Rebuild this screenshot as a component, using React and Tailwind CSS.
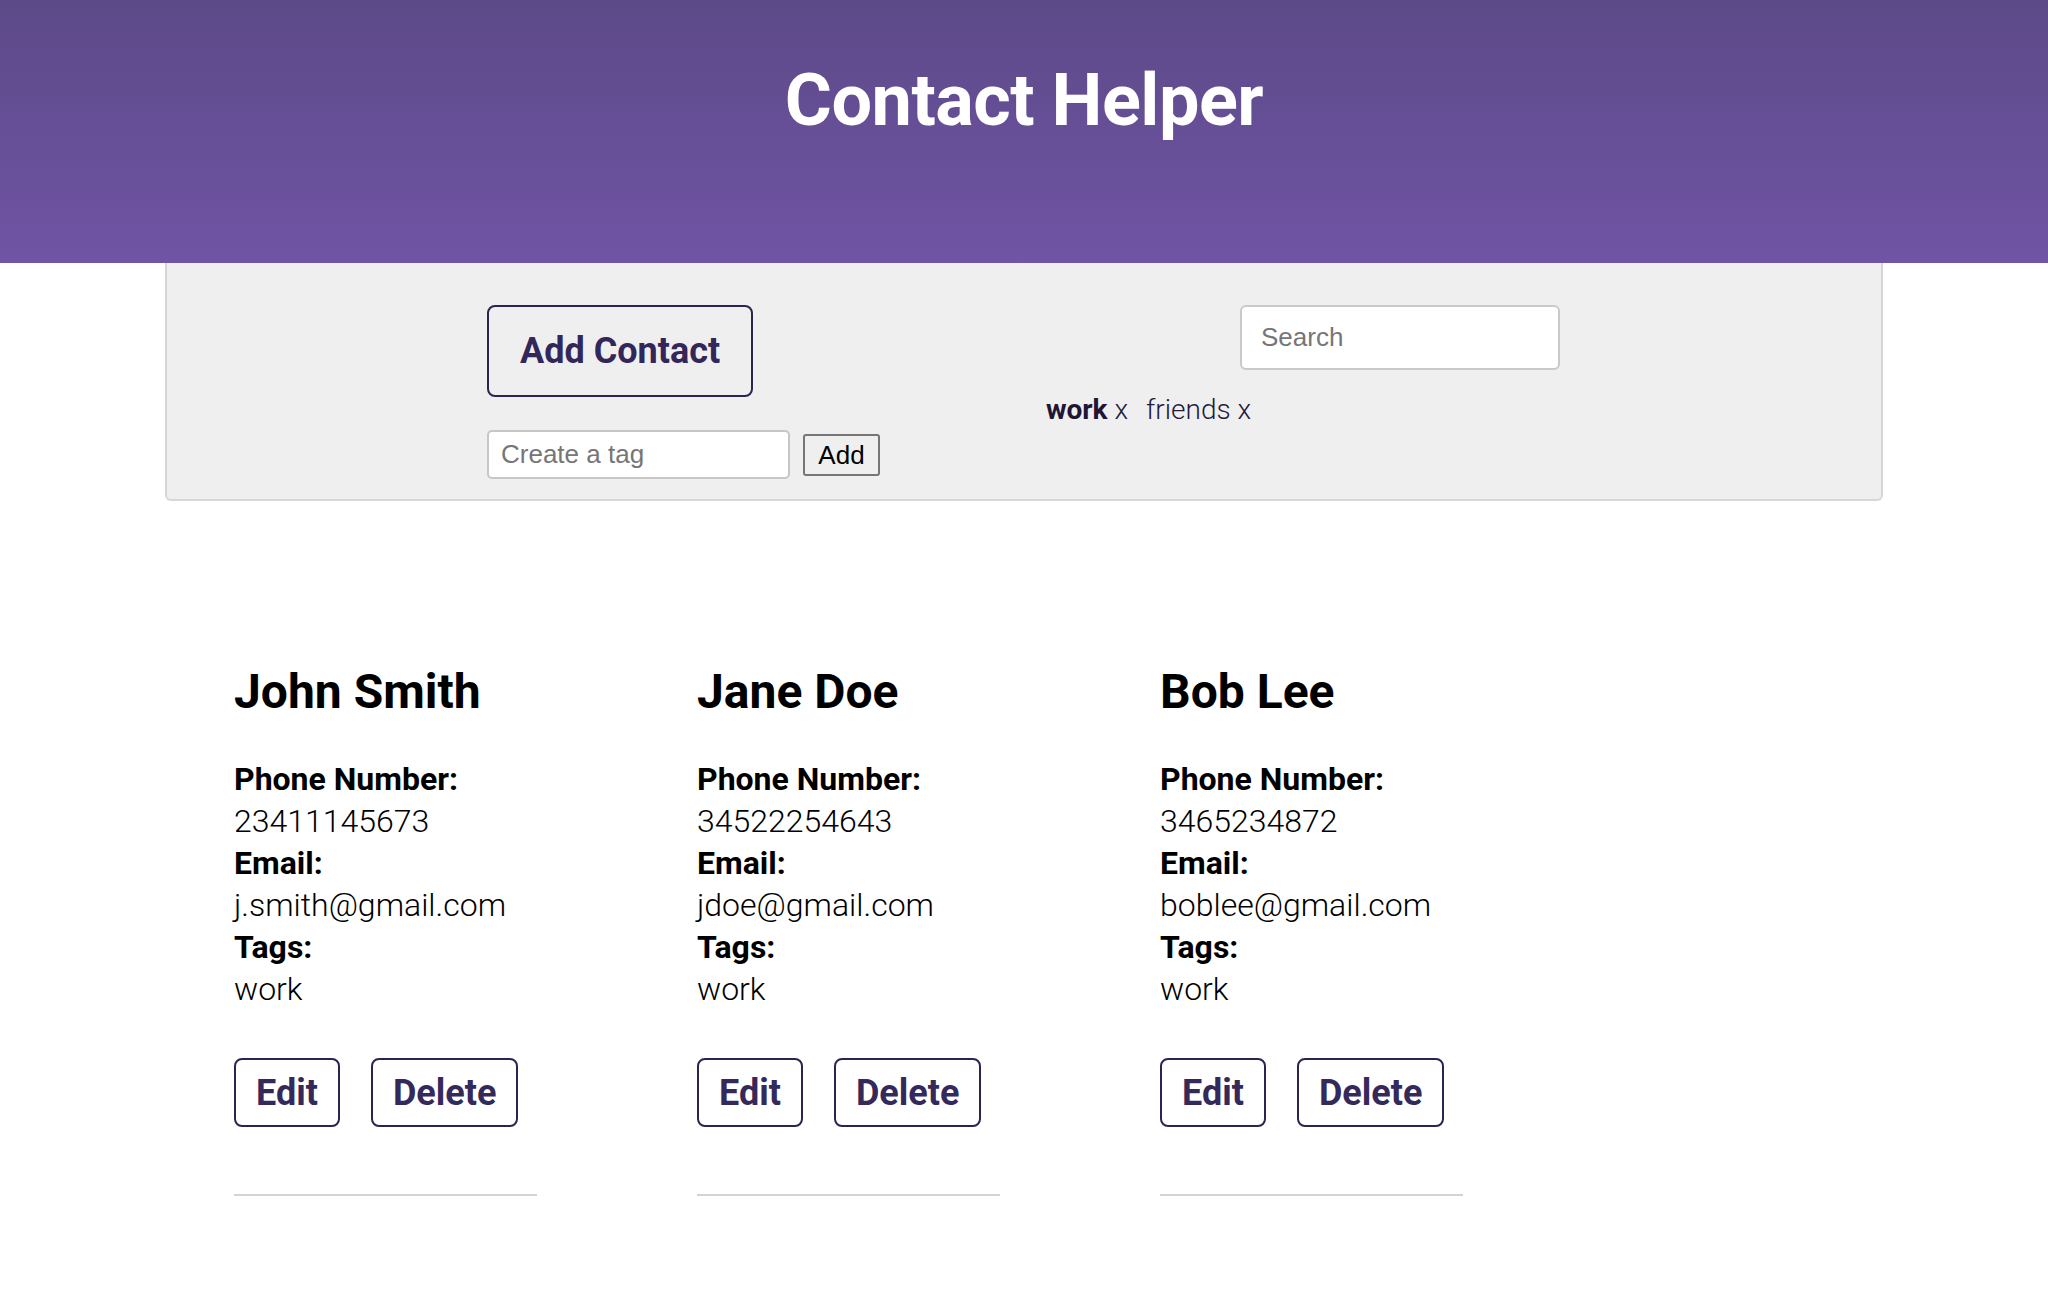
import { useState } from "react";

const contacts = [
    { id: 1, name: "John Smith", phone: "23411145673", email: "j.smith@gmail.com", tags: ["work"] },
    { id: 2, name: "Jane Doe", phone: "34522254643", email: "jdoe@gmail.com", tags: ["work"] },
    { id: 3, name: "Bob Lee", phone: "3465234872", email: "boblee@gmail.com", tags: ["work"] },
];

export default function App() {
    const [tagInput, setTagInput] = useState("");
    const [search, setSearch] = useState("");
    const tags = [
        { name: "work", active: true },
        { name: "friends", active: false },
    ];

    return (
        <div className="min-h-screen bg-white font-['Roboto',sans-serif]">
            {/* Header */}
            <header className="h-[263px] bg-gradient-to-b from-[#5c4a88] to-[#7054a5] pt-[65px]">
                <h1 className="text-center text-[72px] leading-none font-bold text-white tracking-[-0.5px]">Contact Helper</h1>
            </header>

            {/* Controls panel */}
            <div className="mx-[165px] h-[238px] border-2 border-t-0 border-[#d6d6d6] rounded-b-md bg-[#efefef] pt-[42px] flex">
                <div className="ml-[320px] flex flex-col items-start">
                    <button className="h-[92px] px-[31px] border-2 border-[#2e2350] rounded-lg text-[36px] font-bold text-[#32265a]">
                        Add Contact
                    </button>
                    <div className="mt-[33px] flex items-center gap-[13px]">
                        <input
                            value={tagInput}
                            onChange={(e) => setTagInput(e.target.value)}
                            placeholder="Create a tag"
                            className="w-[303px] h-[49px] px-[12px] bg-white border-2 border-[#c6c6c6] rounded-[5px] text-[26px] font-['Liberation_Sans',sans-serif] placeholder:text-[#767676] outline-none"
                        />
                        <button className="w-[77px] h-[42px] border-2 border-[#767676] rounded-[3px] bg-[#efefef] text-[26px] text-black font-['Liberation_Sans',sans-serif]">
                            Add
                        </button>
                    </div>
                </div>

                <div className="ml-[166px] w-[514px] flex flex-col items-start">
                    <input
                        value={search}
                        onChange={(e) => setSearch(e.target.value)}
                        placeholder="Search"
                        className="ml-[194px] w-[320px] h-[65px] px-[19px] bg-white border-2 border-[#c9c9c9] rounded-md text-[26px] font-['Liberation_Sans',sans-serif] placeholder:text-[#767676] outline-none"
                    />
                    <div className="mt-[22px] text-[28px] leading-[36px] text-[#241a3c] flex gap-[18px]">
                        {tags.map((t) => (
                            <span key={t.name}>
                                <span className={t.active ? "font-bold text-[#1f1534]" : "font-light"}>{t.name}</span>
                                <span className="font-light"> x</span>
                            </span>
                        ))}
                    </div>
                </div>
            </div>

            {/* Contacts */}
            <div className="pl-[234px] pt-[167px] flex gap-[160px]">
                {contacts.map((c) => (
                    <div key={c.id} className="w-[303px]">
                        <h2 className="text-[48px] leading-none font-bold text-black whitespace-nowrap">{c.name}</h2>
                        <div className="mt-[42px] text-[32px] leading-[42px] text-black">
                            <p className="font-bold">Phone Number:</p>
                            <p className="font-light">{c.phone}</p>
                            <p className="font-bold">Email:</p>
                            <p className="font-light">{c.email}</p>
                            <p className="font-bold">Tags:</p>
                            <p className="font-light">{c.tags.join(", ")}</p>
                        </div>
                        <div className="mt-[48px] flex gap-[31px]">
                            <button className="h-[69px] px-[20px] border-2 border-[#2e2350] rounded-lg text-[36px] font-bold text-[#35295c]">
                                Edit
                            </button>
                            <button className="h-[69px] px-[20px] border-2 border-[#2e2350] rounded-lg text-[36px] font-bold text-[#35295c]">
                                Delete
                            </button>
                        </div>
                        <div className="mt-[67px] h-[2px] bg-[#d4d4d4]" />
                    </div>
                ))}
            </div>
        </div>
    );
}
